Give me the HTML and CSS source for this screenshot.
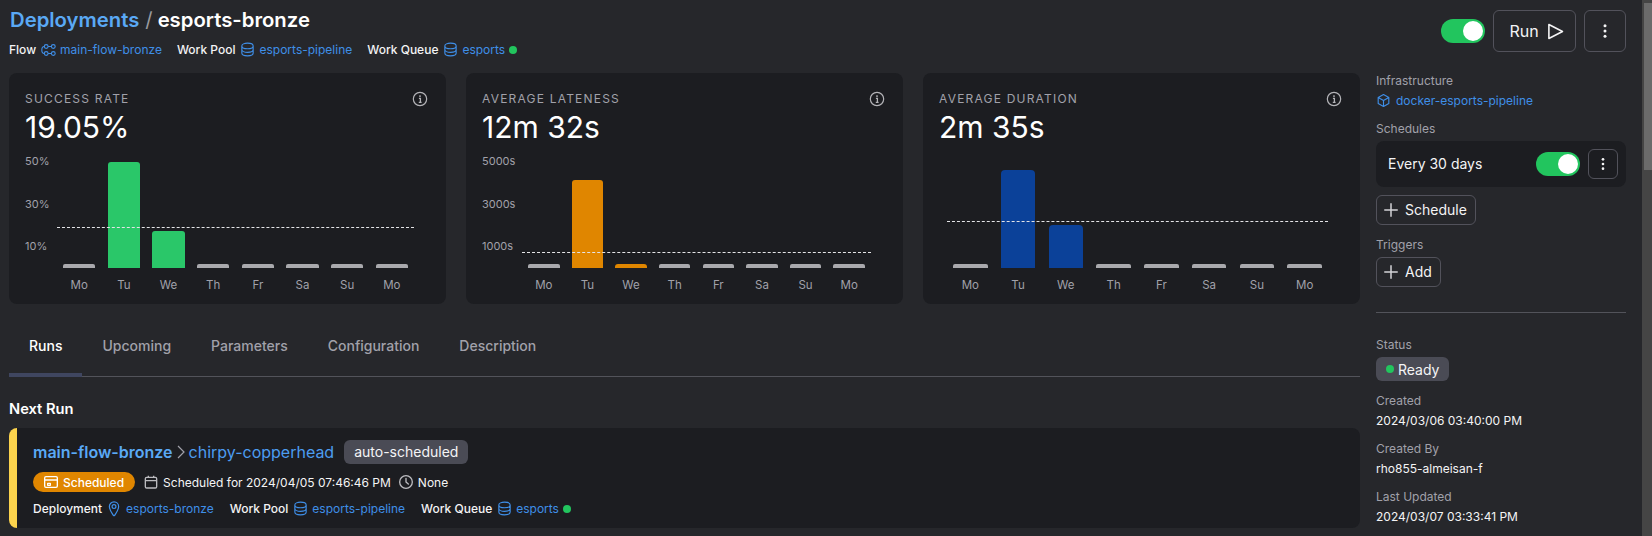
FILE: index.html
```html
<!DOCTYPE html>
<html lang="en">
<head>
<meta charset="utf-8">
<title>esports-bronze</title>
<link rel="stylesheet" href="styles.css">
</head>
<body>
<svg class="defs" width="0" height="0" aria-hidden="true">
  <symbol id="db" viewBox="0 0 24 24"><path fill="none" stroke="currentColor" stroke-width="1.6" stroke-linecap="round" stroke-linejoin="round" d="M4 7v10c0 2.21 3.582 4 8 4s8-1.79 8-4V7M4 7c0 2.21 3.582 4 8 4s8-1.79 8-4M4 7c0-2.21 3.582-4 8-4s8 1.79 8 4m0 5c0 2.21-3.582 4-8 4s-8-1.79-8-4"/></symbol>
  <symbol id="info" viewBox="0 0 24 24"><circle cx="12" cy="12" r="10" fill="none" stroke="currentColor" stroke-width="1.8"/><circle cx="12" cy="7.6" r="1.4" fill="currentColor"/><path d="M10.4 11h2.2v6M10.2 17h4.2" fill="none" stroke="currentColor" stroke-width="1.9"/></symbol>
  <symbol id="plus" viewBox="0 0 24 24"><path d="M12 3v18M3 12h18" fill="none" stroke="currentColor" stroke-width="2"/></symbol>
  <symbol id="kebab" viewBox="0 0 24 24"><circle cx="12" cy="5" r="2" fill="currentColor"/><circle cx="12" cy="12" r="2" fill="currentColor"/><circle cx="12" cy="19" r="2" fill="currentColor"/></symbol>
</svg>
<div class="app">
  <div class="content">
    <header class="top">
      <div>
        <h1 class="crumbs"><a class="crumb-link">Deployments</a><span class="slash">/</span><span>esports-bronze</span></h1>
        <div class="meta meta-top">
          <span class="meta-item"><span>Flow</span>
            <svg class="ico-flow" viewBox="0 0 15 12"><g fill="none" stroke="currentColor" stroke-width="1.1"><circle cx="5.200" cy="2.500" r="1.900"/><circle cx="12.300" cy="2.500" r="1.900"/><circle cx="5.200" cy="9.500" r="1.900"/><circle cx="12.300" cy="9.500" r="1.900"/><path d="M7.100 2.500h3.300M7.100 9.500h3.300M3.300 2.500C1.500 2.500.8 3.800.8 6s.7 3.500 2.500 3.500"/></g></svg>
            <a class="lnk">main-flow-bronze</a></span>
          <span class="meta-item"><span>Work Pool</span><svg class="ico-db"><use href="#db"/></svg><a class="lnk">esports-pipeline</a></span>
          <span class="meta-item"><span>Work Queue</span><svg class="ico-db"><use href="#db"/></svg><a class="lnk">esports</a><i class="dot"></i></span>
        </div>
      </div>
      <div class="actions">
        <span class="toggle"><i class="knob"></i></span>
        <button class="btn btn-run">Run
          <svg class="ico-play" viewBox="0 0 18 18"><path d="M2 1.600 16.400 9 2 16.400Z" fill="none" stroke="currentColor" stroke-width="1.7" stroke-linejoin="round"/></svg>
        </button>
        <button class="btn btn-menu"><svg class="ico-kebab"><use href="#kebab"/></svg></button>
      </div>
    </header>

    <div class="columns">
      <main class="main">
        <section class="cards">
          <article class="card">
            <div class="card-head"><h2 class="card-title">SUCCESS RATE</h2><svg class="ico-info"><use href="#info"/></svg></div>
            <div class="card-value">19.05%</div>
            <div class="chart chart-a">
              <div class="axis"><span>50%</span><span>30%</span><span>10%</span></div>
              <div class="plot">
                <div class="bars">
                  <i class="bar"></i><i class="bar green" style="height:106px"></i><i class="bar green" style="height:37px"></i><i class="bar"></i><i class="bar"></i><i class="bar"></i><i class="bar"></i><i class="bar"></i>
                </div>
                <div class="days"><span>Mo</span><span>Tu</span><span>We</span><span>Th</span><span>Fr</span><span>Sa</span><span>Su</span><span>Mo</span></div>
                <hr class="avg avg-a">
              </div>
            </div>
          </article>
          <article class="card">
            <div class="card-head"><h2 class="card-title">AVERAGE LATENESS</h2><svg class="ico-info"><use href="#info"/></svg></div>
            <div class="card-value">12m 32s</div>
            <div class="chart chart-b">
              <div class="axis"><span>5000s</span><span>3000s</span><span>1000s</span></div>
              <div class="plot">
                <div class="bars">
                  <i class="bar"></i><i class="bar orange" style="height:88px"></i><i class="bar orange"></i><i class="bar"></i><i class="bar"></i><i class="bar"></i><i class="bar"></i><i class="bar"></i>
                </div>
                <div class="days"><span>Mo</span><span>Tu</span><span>We</span><span>Th</span><span>Fr</span><span>Sa</span><span>Su</span><span>Mo</span></div>
                <hr class="avg avg-b">
              </div>
            </div>
          </article>
          <article class="card">
            <div class="card-head"><h2 class="card-title">AVERAGE DURATION</h2><svg class="ico-info"><use href="#info"/></svg></div>
            <div class="card-value">2m 35s</div>
            <div class="chart chart-c">
              <div class="plot">
                <div class="bars">
                  <i class="bar"></i><i class="bar blue" style="height:98px"></i><i class="bar blue" style="height:43px"></i><i class="bar"></i><i class="bar"></i><i class="bar"></i><i class="bar"></i><i class="bar"></i>
                </div>
                <div class="days"><span>Mo</span><span>Tu</span><span>We</span><span>Th</span><span>Fr</span><span>Sa</span><span>Su</span><span>Mo</span></div>
                <hr class="avg avg-c">
              </div>
            </div>
          </article>
        </section>

        <nav class="tabs">
          <a class="tab active">Runs</a><a class="tab">Upcoming</a><a class="tab">Parameters</a><a class="tab">Configuration</a><a class="tab">Description</a>
        </nav>

        <h3 class="next-title">Next Run</h3>
        <article class="run">
          <div class="run-title">
            <a class="run-flow">main-flow-bronze</a>
            <svg class="ico-chev" viewBox="0 0 10 16"><path d="M2 2l6 6-6 6" fill="none" stroke="currentColor" stroke-width="1.200"/></svg>
            <a class="run-name">chirpy-copperhead</a>
            <span class="tag">auto-scheduled</span>
          </div>
          <div class="run-status">
            <span class="pill">
              <svg class="ico-16" viewBox="0 0 24 24"><g fill="none" stroke="currentColor" stroke-width="2" stroke-linejoin="round"><rect x="2.500" y="4" width="19" height="16" rx="2"/><path d="M2.500 9h19M7 14h4v3H7z"/></g></svg>
              Scheduled</span>
            <span class="stat"><svg class="ico-stat" viewBox="0 0 24 24"><g fill="none" stroke="currentColor" stroke-width="2" stroke-linejoin="round"><rect x="3.500" y="5" width="17" height="16" rx="2"/><path d="M3.500 10h17M8 2.500V6M16 2.500V6"/></g></svg>Scheduled for 2024/04/05 07:46:46 PM</span>
            <span class="stat"><svg class="ico-stat" viewBox="0 0 24 24"><g fill="none" stroke="currentColor" stroke-width="2" stroke-linecap="round" stroke-linejoin="round"><circle cx="12" cy="12" r="9.500"/><path d="M12 6.500V12l3.500 3"/></g></svg>None</span>
          </div>
          <div class="meta run-meta">
            <span class="meta-item"><span>Deployment</span>
              <svg class="ico-pin" viewBox="0 0 14 20"><g fill="none" stroke="currentColor" stroke-width="1.500"><path d="M7 1.200c3.300 0 5.800 2.500 5.800 5.800 0 4-3.600 8.600-5 11a1 1 0 0 1-1.600 0c-1.400-2.400-5-7-5-11C1.200 3.700 3.700 1.200 7 1.200Z"/><circle cx="7" cy="7" r="2.400"/></g></svg>
              <a class="lnk">esports-bronze</a></span>
            <span class="meta-item"><span>Work Pool</span><svg class="ico-db"><use href="#db"/></svg><a class="lnk">esports-pipeline</a></span>
            <span class="meta-item"><span>Work Queue</span><svg class="ico-db"><use href="#db"/></svg><a class="lnk">esports</a><i class="dot"></i></span>
          </div>
        </article>
      </main>

      <aside class="rail">
        <div class="label">Infrastructure</div>
        <div class="rail-link"><svg class="ico-cube" viewBox="0 0 24 24"><path fill="none" stroke="currentColor" stroke-width="1.800" stroke-linejoin="round" d="M12 2.500 20.500 7.200v9.600L12 21.500l-8.500-4.700V7.200ZM3.500 7.200 12 12l8.500-4.800M12 12v9.500"/></svg><a class="lnk">docker-esports-pipeline</a></div>
        <div class="label label-sched">Schedules</div>
        <div class="sched">
          <span class="sched-name">Every 30 days</span>
          <span class="sched-right">
            <span class="toggle"><i class="knob"></i></span>
            <button class="btn btn-small"><svg class="ico-kebab"><use href="#kebab"/></svg></button>
          </span>
        </div>
        <button class="btn btn-add btn-add-sched"><svg class="ico-plus"><use href="#plus"/></svg>Schedule</button>
        <div class="label label-trig">Triggers</div>
        <button class="btn btn-add"><svg class="ico-plus"><use href="#plus"/></svg>Add</button>
        <hr class="rule">
        <div class="label">Status</div>
        <span class="ready"><i class="dot"></i>Ready</span>
        <div class="label label-gap">Created</div>
        <div class="value">2024/03/06 03:40:00 PM</div>
        <div class="label label-gap2">Created By</div>
        <div class="value">rho855-almeisan-f</div>
        <div class="label label-gap2">Last Updated</div>
        <div class="value">2024/03/07 03:33:41 PM</div>
      </aside>
    </div>
  </div>
  <div class="scrollbar"><div class="thumb"></div></div>
</div>
</body>
</html>
```
FILE: styles.css
```css
* { box-sizing: border-box; }
html, body { margin: 0; height: 536px; overflow: hidden; }
body { background: #26272b; color: #f4f4f5; font-family: Inter, "Liberation Sans", sans-serif; font-size: 12px; }
a { text-decoration: none; }
i { display: block; }
button { font-family: inherit; color: inherit; background: none; cursor: pointer; }
.defs { position: absolute; }
.app { display: flex; height: 536px; }
.content { flex: 1; min-width: 0; padding: 0 16px 0 9px; overflow: hidden; }
.scrollbar { width: 10px; background: #454545; padding: 3px 0 0 2px; }
.thumb { height: 167px; background: #6b6b6b; }

.top { display: flex; justify-content: space-between; height: 73px; }
.crumbs { margin: 8px 0 0; padding-left: 1px; font-size: 20.3px; line-height: 24px; font-weight: 600; color: #fff; }
.crumb-link { color: #5aa9f5; }
.slash { color: #9a9a9f; font-weight: 400; margin: 0 5px 0 6px; }
.meta { display: flex; gap: 16px; margin-top: 9px; line-height: 16px; color: #f4f4f5; }
.meta-top { gap: 15px; }
.meta-item { display: flex; align-items: center; gap: 6px; font-weight: 500; white-space: nowrap; }
.lnk { color: #3f8fe8; font-weight: 400; }
.dot { width: 8px; height: 8px; border-radius: 50%; background: #22c55e; margin-left: -2px; }
.ico-flow { width: 15px; height: 12px; color: #3f8fe8; margin: 0 -2px 0 -1px; }
.ico-db { width: 17px; height: 17px; color: #3f8fe8; margin: 0 -2.5px; }
.ico-pin { width: 12px; height: 16px; color: #3f8fe8; }
.actions { display: flex; align-items: center; gap: 8px; padding-top: 10px; height: 52px; }
.toggle { display: flex; justify-content: flex-end; align-items: center; width: 44px; height: 24px; padding: 2px; border-radius: 12px; background: #22c55e; }
.knob { width: 20px; height: 20px; border-radius: 50%; background: #fff; }
.btn { display: flex; align-items: center; justify-content: center; border: 1px solid #52525b; border-radius: 6px; padding: 0; }
.btn-run { width: 83px; height: 42px; gap: 8px; padding-left: 4px; font-size: 16px; font-weight: 400; }
.ico-play { width: 17px; height: 17px; }
.btn-menu { width: 42px; height: 42px; }
.ico-kebab { width: 18px; height: 18px; }

.columns { display: grid; grid-template-columns: 1351px 250px; gap: 16px; }
.cards { display: grid; grid-template-columns: repeat(3, 1fr); gap: 20px; }
.card { height: 231px; background: #1c1d21; border-radius: 8px; padding: 16px 16px 0; }
.card-head { display: flex; justify-content: space-between; align-items: center; height: 20px; }
.card-title { margin: 0; font-size: 12px; font-weight: 400; letter-spacing: 1.2px; color: #a1a1aa; line-height: 20px; }
.ico-info { width: 16px; height: 16px; color: #b4b4b8; margin-right: 2px; }
.card-value { font-size: 30px; line-height: 36px; font-weight: 400; color: #fff; }
.chart { position: relative; display: flex; margin-top: 6px; height: 150px; padding-right: 16px; }
.axis { display: flex; flex-direction: column; gap: 24.5px; padding-top: 1px; font-size: 11px; line-height: 18px; color: #a1a1aa; flex: none; }
.chart-a .axis { width: 32px; }
.chart-b .axis { width: 40px; }
.chart-c { padding-left: 8px; }
.plot { position: relative; flex: 1; padding: 0 6px; }
.bars { display: flex; align-items: flex-end; column-gap: 3.57%; height: 117px; }
.bar { flex: 1; height: 4.5px; background: #a9a9ad; border-radius: 2px 2px 0 0; }
.bar.green { background: #2ac769; border-radius: 3px 3px 0 0; }
.bar.orange { background: #e08600; border-radius: 3px 3px 0 0; }
.bar.blue { background: #0b4199; border-radius: 4px 4px 0 0; }
.days { display: flex; column-gap: 3.57%; margin-top: 9px; font-size: 11.5px; line-height: 16px; color: #a1a1aa; }
.days span { flex: 1; text-align: center; }
.avg { position: absolute; left: 0; right: 0; margin: 0; border: 0; border-top: 1px dashed #e4e4e7; }
.avg-a { top: 76px; }
.avg-b { top: 101px; }
.avg-c { top: 70px; }

.tabs { display: flex; height: 73px; border-bottom: 1px solid #52535a; }
.tab { display: flex; align-items: center; padding: 14px 20px 0; font-size: 14px; font-weight: 500; color: #a1a1aa; border-bottom: 4px solid transparent; margin-bottom: -1px; }
.tab.active { color: #fff; border-bottom-color: #3f4660; }
.next-title { margin: 22px 0 0; font-size: 14.7px; line-height: 20px; font-weight: 600; color: #fff; }
.run { margin-top: 9px; height: 100px; background: #1c1d21; border-left: 8px solid #fcd34d; border-radius: 8px; padding: 12px 16px; }
.run-title { display: flex; align-items: center; height: 24px; font-size: 16px; }
.run-flow { color: #5aa9f5; font-weight: 600; }
.run-name { color: #4c9cf0; }
.ico-chev { width: 10px; height: 16px; margin: 0 3px; color: #a1a1aa; }
.tag { margin-left: 10px; padding: 0 10px; height: 24px; line-height: 24px; border-radius: 6px; background: #4a4b55; font-size: 14px; }
.run-status { display: flex; align-items: center; gap: 7px; margin-top: 8px; height: 20px; }
.pill { display: flex; align-items: center; gap: 4px; height: 20px; padding: 0 11px 0 10px; margin-right: 1px; border-radius: 10px; background: #e08600; color: #fff; font-weight: 500; }
.stat { display: flex; align-items: center; gap: 4px; }
.ico-16 { width: 16px; height: 16px; }
.ico-stat { width: 16px; height: 16px; color: #bcbcc0; }
.run-meta { margin-top: 8px; }

.rail { display: block; }
.label { font-size: 12px; line-height: 16px; color: #a1a1aa; }
.rail-link { display: flex; align-items: center; gap: 5px; margin-top: 3px; height: 16px; }
.ico-cube { width: 15px; height: 15px; color: #3f8fe8; }
.label-sched { margin-top: 13px; }
.sched { display: flex; align-items: center; justify-content: space-between; height: 46px; margin-top: 4px; padding: 0 8px 0 12px; background: #1c1d21; border-radius: 8px; font-size: 14px; }
.sched-name { padding-bottom: 2px; }
.sched-right { display: flex; align-items: center; gap: 8px; }
.btn-small { width: 30px; height: 30px; }
.btn-small .ico-kebab { width: 16px; height: 16px; }
.btn-add { height: 30px; padding: 0 8px 1px 5px; gap: 5px; font-size: 14px; color: #f4f4f5; }
.btn-add-sched { margin-top: 8px; }
.ico-plus { width: 18px; height: 18px; color: #d4d4d8; }
.label-trig { margin-top: 12px; margin-bottom: 4px; }
.rule { margin: 25px 0 24px; border: 0; border-top: 1px solid #52535a; }
.ready { display: inline-flex; align-items: center; gap: 4px; height: 24px; margin-top: 4px; padding: 0 10px; border-radius: 6px; background: #4a4b55; font-size: 14px; vertical-align: top; }
.ready .dot { margin-left: 0; }
.label-gap { margin-top: 12px; }
.label-gap2 { margin-top: 12px; }
.value { margin-top: 4px; line-height: 16px; color: #f4f4f5; }
```
